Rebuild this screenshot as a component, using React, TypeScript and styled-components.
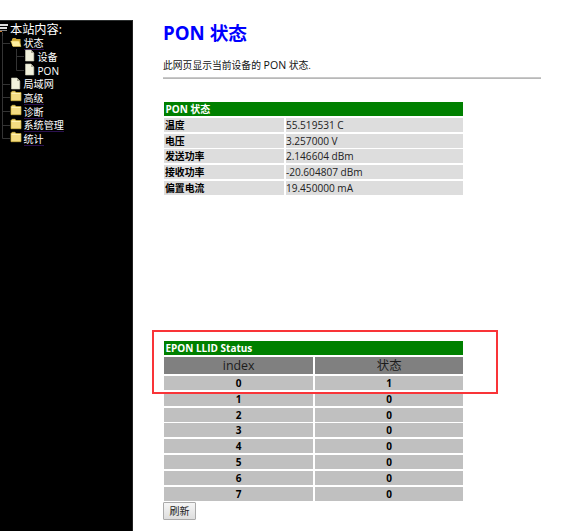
import React from "react";
import styled, { createGlobalStyle } from "styled-components";

const Global = createGlobalStyle`
  * { box-sizing: border-box; }
  body {
    margin: 0;
    background: #fff;
    overflow: hidden;
    font-family: "Open Sans", "Noto Sans CJK SC", sans-serif;
    font-size: 10px;
    color: #111;
  }
`;

const Page = styled.div`
  display: flex;
  width: 576px;
  height: 531px;
  overflow: hidden;
`;

const Sidebar = styled.nav`
  width: 133px;
  margin-top: 20px;
  padding-top: 2px;
  flex: none;
  background: #000;
  border-top: 1px solid #2c2f2f;
  border-right: 1px solid #222;
  color: #fff;
`;

const TreeTitle = styled.div`
  display: flex;
  align-items: center;
  height: 13px;
  gap: 1px;
  font-size: 12.2px;
  line-height: 12px;
  white-space: nowrap;
`;

const TreeRow = styled.div`
  display: flex;
  align-items: center;
  height: 13.65px;
  white-space: nowrap;
`;

const TreeLabel = styled.span<{ $visited?: boolean }>`
  margin-left: 1.5px;
  padding-top: 1px;
  font-size: 10.1px;
  line-height: 12px;
  height: 13px;
  box-shadow: 0 1px 0 ${(p) => (p.$visited ? "#2c1150" : "transparent")};
`;

const Drawing = styled.svg`
  display: block;
  flex: none;
`;

const Content = styled.main`
  position: relative;
  flex: 1;
  padding-left: 30px;
`;

const Title = styled.h2`
  margin: 20px 0 0;
  height: 26px;
  font-size: 18.7px;
  line-height: 25px;
  font-weight: 700;
  color: #00f;
  white-space: nowrap;
`;

const Intro = styled.p`
  margin: 12px 0 0;
  height: 19px;
  line-height: 15px;
  font-size: 9.8px;
  white-space: nowrap;
`;

const IntroName = styled.span`
  font-size: 10.6px;
`;

const Rule = styled.hr`
  width: 377.5px;
  height: 2px;
  margin: 0 0 23px;
  border: 0;
  border-top: 1px solid #c9c9c9;
  background: #b8b8b8;
`;

const Table = styled.div<{ $columns: string; $rows: string }>`
  display: grid;
  width: 299px;
  margin-left: 1.4px;
  grid-template-columns: ${(p) => p.$columns};
  grid-template-rows: ${(p) => p.$rows};
  column-gap: 2px;
  row-gap: 1.8px;
`;

const Caption = styled.div`
  grid-column: 1 / -1;
  padding-left: 1px;
  background: #008000;
  color: #fff;
  font-weight: 700;
  line-height: 15px;
  white-space: nowrap;
`;

const Cell = styled.div<{ $bold?: boolean }>`
  padding-left: ${(p) => (p.$bold ? 0.5 : 0)}px;
  background: #ddd;
  color: ${(p) => (p.$bold ? "#000" : "#222")};
  font-size: ${(p) => (p.$bold ? 9.9 : 10.1)}px;
  font-weight: ${(p) => (p.$bold ? 700 : 400)};
  line-height: ${(p) => (p.$bold ? 15.5 : 14)}px;
  white-space: nowrap;
`;

const HeadCell = styled.div`
  background: #808080;
  color: #1c1c1c;
  font-size: 12.4px;
  line-height: 18px;
  text-align: center;
`;

const IndexCell = styled.div`
  background: #c0c0c0;
  color: #000;
  font-weight: 700;
  line-height: 14px;
  text-align: center;
`;

const Spacer = styled.div`
  height: 146px;
`;

const RefreshButton = styled.button`
  display: block;
  width: 33px;
  height: 18px;
  margin-top: 1px;
  padding: 1px 0 0;
  border: 1px solid #aaa;
  border-radius: 1px;
  background: linear-gradient(#f6f6f6, #dedede);
  color: #222;
  font-family: inherit;
  font-size: 10px;
  line-height: 15px;
`;

const Highlight = styled.div`
  position: absolute;
  left: 19px;
  top: 330px;
  width: 346px;
  height: 64px;
  border: 2px solid #f93438;
`;

type IconKind = "open" | "folder" | "page";

function TreeIcon({ kind, depth, last }: { kind: IconKind; depth: number; last: boolean }) {
  const x = depth === 1 ? 10 : 24;
  const width = depth === 1 ? 22 : 36;
  const line = "#343434";
  return (
    <Drawing width={width} height={14} viewBox={`0 0 ${width} 14`}>
      {depth === 1 ? (
        <path d={last ? "M2.5 0V7.5H10" : "M2.5 0V14M2.5 7.5H10"} stroke={line} fill="none" />
      ) : (
        <path d={last ? "M2.5 0V14M16.5 0V7.5H24" : "M2.5 0V14M16.5 0V14M16.5 7.5H24"} stroke={line} fill="none" />
      )}
      {kind === "page" && (
        <g transform={`translate(${x} 0)`}>
          <path d="M1.5 1H7L9.8 4V12H1.5Z" fill="#f1f1dc" stroke="#c9c9b5" strokeWidth=".6" />
          <path d="M7 1V4H9.8Z" fill="#aaa995" />
        </g>
      )}
      {kind === "folder" && (
        <g transform={`translate(${x} -0.5)`}>
          <path d="M1 3L2.2 1.8H5L6 3H11V11.2H1Z" fill="#f4dc82" stroke="#d6b83e" strokeWidth=".7" />
          <path d="M1.6 4H10.4" stroke="#fff2b4" />
        </g>
      )}
      {kind === "open" && (
        <g transform={`translate(${x} 0)`}>
          <path d="M2 10V3L3 2H5.5L6.5 3H10.5V10Z" fill="#cfa936" />
          <path d="M.8 5H9L11 10.5H3Z" fill="#fff0a0" stroke="#e2c451" strokeWidth=".6" />
        </g>
      )}
    </Drawing>
  );
}

const tree: { label: string; kind: IconKind; depth: number; visited?: boolean; last?: boolean }[] = [
  { label: "状态", kind: "open", depth: 1, visited: true },
  { label: "设备", kind: "page", depth: 2 },
  { label: "PON", kind: "page", depth: 2, last: true },
  { label: "局域网", kind: "page", depth: 1 },
  { label: "高级", kind: "folder", depth: 1, visited: true },
  { label: "诊断", kind: "folder", depth: 1, visited: true },
  { label: "系统管理", kind: "folder", depth: 1, visited: true },
  { label: "统计", kind: "folder", depth: 1, visited: true, last: true },
];

const readings = [
  ["温度", "55.519531 C"],
  ["电压", "3.257000 V"],
  ["发送功率", "2.146604 dBm"],
  ["接收功率", "-20.604807 dBm"],
  ["偏置电流", "19.450000 mA"],
];

const llid = [1, 0, 0, 0, 0, 0, 0, 0];

export default function App() {
  return (
    <Page>
      <Global />
      <Sidebar>
        <TreeTitle>
          <Drawing width={9} height={13} viewBox="0 0 9 13">
            <path d="M0 1H8V3H0ZM0 4H7V6H0Z" fill="#ddd" />
            <path d="M0 7.5H7" stroke="#888" />
            <path d="M0 8H2V9H0Z" fill="#c7792b" />
            <path d="M2.5 9V13" stroke="#444" />
          </Drawing>
          <span>本站内容:</span>
        </TreeTitle>
        {tree.map((t) => (
          <TreeRow key={t.label}>
            <TreeIcon kind={t.kind} depth={t.depth} last={!!t.last} />
            <TreeLabel $visited={t.visited}>{t.label}</TreeLabel>
          </TreeRow>
        ))}
      </Sidebar>
      <Content>
        <Title>PON 状态</Title>
        <Intro>
          此网页显示当前设备的 <IntroName>PON</IntroName> 状态.
        </Intro>
        <Rule />
        <Table $columns="119.5px 1fr" $rows="14px repeat(5, 14px)">
          <Caption>PON 状态</Caption>
          {readings.map(([name, value]) => (
            <React.Fragment key={name}>
              <Cell $bold>{name}</Cell>
              <Cell>{value}</Cell>
            </React.Fragment>
          ))}
        </Table>
        <Spacer />
        <Table $columns="1fr 1fr" $rows="14px 17.4px repeat(8, 14px)">
          <Caption>EPON LLID Status</Caption>
          <HeadCell>index</HeadCell>
          <HeadCell>状态</HeadCell>
          {llid.map((status, i) => (
            <React.Fragment key={i}>
              <IndexCell>{i}</IndexCell>
              <IndexCell>{status}</IndexCell>
            </React.Fragment>
          ))}
        </Table>
        <RefreshButton>刷新</RefreshButton>
        <Highlight />
      </Content>
    </Page>
  );
}
